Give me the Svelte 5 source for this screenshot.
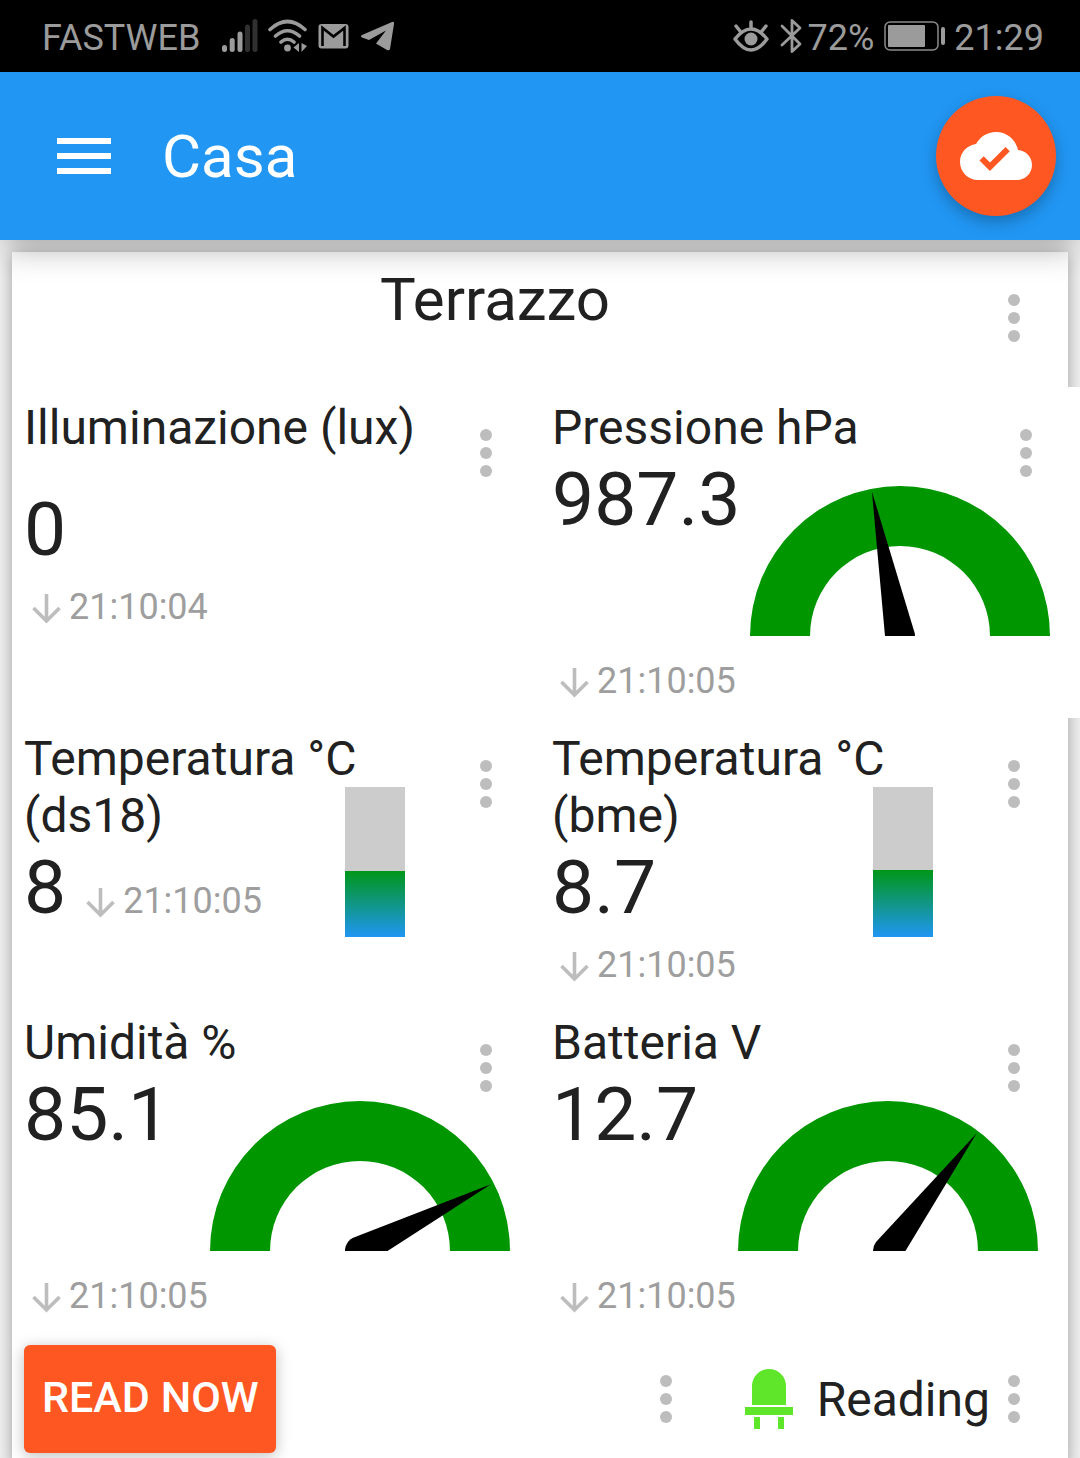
<script>
  const widgets = [
    { name: 'Illuminazione (lux)', value: '0', time: '21:10:04', kind: 'spaced' },
    { name: 'Pressione hPa', value: '987.3', time: '21:10:05', kind: 'gauge', angle: -11, wide: true },
    { name: 'Temperatura °C (ds18)', value: '8', time: '21:10:05', kind: 'tank', level: 66, inline: true },
    { name: 'Temperatura °C (bme)', value: '8.7', time: '21:10:05', kind: 'tank', level: 67 },
    { name: 'Umidità %', value: '85.1', time: '21:10:05', kind: 'gauge', angle: 63 },
    { name: 'Batteria V', value: '12.7', time: '21:10:05', kind: 'gauge', angle: 37 }
  ];
</script>

{#snippet dots(label)}
  <button class="more" aria-label={label}>
    <svg width="12" height="48" viewBox="0 0 12 48" fill="currentColor">
      <circle cx="6" cy="6" r="6" /><circle cx="6" cy="24" r="6" /><circle cx="6" cy="42" r="6" />
    </svg>
  </button>
{/snippet}

<div class="status">
  <div class="group">
    <span class="carrier">FASTWEB</span>
    <svg width="36" height="34" viewBox="0 0 36 34" stroke-width="5" stroke-linecap="round">
      <g stroke="#9b9b9b"><path d="M2.500 28.500v2M10.200 21.500v9M18 15v15.500" /></g>
      <g stroke="#303030"><path d="M25.500 8v22.500M33 2.500v28" /></g>
    </svg>
    <svg width="40" height="34" viewBox="0 0 40 34" fill="none" stroke="#9b9b9b" stroke-width="3.600" stroke-linecap="round">
      <path d="M2 10.500Q19.500 -5.500 37 10.500M7.500 17Q19.500 6.500 31.500 17M13 23Q19.500 17.500 26 23" />
      <circle cx="19.500" cy="29" r="3.400" fill="#9b9b9b" stroke="none" />
      <path d="M31 24v9l-5.500-4.500zM33.500 24v9l5.500-6z" fill="#9b9b9b" stroke="none" />
    </svg>
    <svg width="31" height="26" viewBox="0 0 31 26">
      <rect x="0.500" y="1" width="30" height="24.500" rx="3" fill="#9b9b9b" />
      <path d="M4.500 23V5L15.500 13.500L26.500 5V23" fill="none" stroke="#000" stroke-width="2.600" />
    </svg>
    <svg width="36" height="30" viewBox="0 0 36 30">
      <path d="M3 14L33 1Q35.500 0 35 3L31 28Q30.500 30 28 29L17 22.500L27 9.500L10 19L3 16.500Q1 15 3 14z" fill="#9b9b9b" />
    </svg>
  </div>
  <div class="group right">
    <svg class="eye" width="36" height="32" viewBox="0 0 36 32" fill="none" stroke="#9b9b9b" stroke-width="3.500" stroke-linecap="round" stroke-linejoin="round">
      <path d="M2 19Q18 -1 34 19Q18 41 2 19zM18 2v6M3 6l4 5M33 6l-4 5" />
      <circle cx="18" cy="19" r="6.500" fill="#9b9b9b" stroke="none" />
    </svg>
    <svg width="22" height="36" viewBox="0 0 22 36" fill="none" stroke="#9b9b9b" stroke-width="2.800" stroke-linecap="round" stroke-linejoin="round">
      <path d="M2 8L20 26L12 33.500V2.500L20 10L2 27" />
    </svg>
    <span class="percent">72%</span>
    <svg width="62" height="30" viewBox="0 0 62 30">
      <rect x="1" y="1" width="53" height="28" rx="5" fill="none" stroke="#8a8a8a" stroke-width="1.500" />
      <rect x="4" y="4" width="37" height="22" rx="1" fill="#9b9b9b" />
      <rect x="57" y="6" width="4" height="18" rx="2" fill="#9b9b9b" />
    </svg>
    <span class="clock">21:29</span>
  </div>
</div>

<header>
  <button class="burger" aria-label="Menu"><span></span><span></span><span></span></button>
  <h1>Casa</h1>
  <button class="cloud" aria-label="Connected">
    <svg width="72" height="72" viewBox="0 0 24 24" fill="#fff">
      <path d="M19.350 10.040C18.670 6.590 15.640 4 12 4 9.110 4 6.600 5.640 5.350 8.040 2.340 8.360 0 10.910 0 14c0 3.310 2.690 6 6 6h13c2.760 0 5-2.240 5-5 0-2.640-2.050-4.780-4.650-4.960zM10 17l-3.500-3.500 1.410-1.410L10 14.170 15.180 9l1.410 1.410L10 17z" />
    </svg>
  </button>
</header>

<main>
  <section class="card">
    <div class="top">
      <h2>Terrazzo</h2>
      {@render dots('Terrazzo menu')}
    </div>

    <div class="grid">
      {#each widgets as w}
        <article class="cell {w.kind}" class:wide={w.wide}>
          {#if w.kind === 'gauge'}
            <svg class="dial" width="300" height="150" viewBox="0 0 300 150">
              <path d="M0 150A150 150 0 0 1 300 150H240A90 90 0 0 0 60 150z" fill="#009600" />
              <path d="M-15 0L0 -147L15 0A15 15 0 0 1 -15 0z" transform="translate(150 150) rotate({w.angle})" />
            </svg>
          {:else if w.kind === 'tank'}
            <div class="level"><div class="fill" style="height: {w.level}px"></div></div>
          {/if}
          <div class="info" class:inline={w.inline}>
            <h3>{w.name}</h3>
            <div class="value">{w.value}</div>
            <div class="time">
              <svg width="29" height="30" viewBox="0 0 29 30" fill="none" stroke="#bdbdbd" stroke-width="3.600">
                <path d="M14.500 0V26M1.500 14L14.500 27L27.500 14" />
              </svg>
              <time>{w.time}</time>
            </div>
          </div>
          {@render dots(w.name + ' menu')}
        </article>
      {/each}
    </div>

    <div class="bottom">
      <div class="action">
        <button class="read">READ NOW</button>
        {@render dots('Read now menu')}
      </div>
      <div class="led">
        <svg width="48" height="60" viewBox="0 0 48 60" fill="#5fe62b">
          <path d="M7 36V17A17 17 0 0 1 41 17V36zM0 38H48V46H0zM9 48H15V60H9zM33 48H39V60H33z" />
        </svg>
        <span>Reading</span>
        {@render dots('Reading menu')}
      </div>
    </div>
  </section>
</main>

<style>
  :global(body) {
    margin: 0;
    background: #f0f0f0;
    color: #212121;
    font-family: Roboto, sans-serif;
    font-size: 48px;
    line-height: 57px;
  }
  :global(*) { box-sizing: border-box; }
  h1, h2, h3 { margin: 0; font-weight: 400; }
  h3 { font-size: 48px; }
  button { border: 0; padding: 0; background: none; font-family: inherit; cursor: pointer; }
  svg { display: block; flex: none; }

  .status {
    display: flex;
    justify-content: space-between;
    align-items: center;
    height: 72px;
    padding: 3px 36px 0 42px;
    background: #000;
    color: #9b9b9b;
    font-size: 36px;
    line-height: 42px;
  }
  .group { display: flex; align-items: center; gap: 10px; }
  .group svg { margin-bottom: 3px; }
  .carrier { margin-right: 12px; }
  .right { gap: 8px; }
  .eye { margin-right: 3px; }
  .percent { margin: 0 2px 0 -2px; }

  header {
    position: relative;
    z-index: 2;
    display: flex;
    align-items: center;
    height: 168px;
    padding: 0 24px 0 57px;
    background: #2196f3;
    color: #fff;
    box-shadow: 0 15px 30px -6px rgba(0, 0, 0, 0.3);
  }
  .burger { display: grid; gap: 9px; width: 54px; }
  .burger span { height: 6px; background: #fff; }
  h1 { flex: 1; margin-left: 51px; padding-top: 2px; font-size: 60px; line-height: 72px; }
  .cloud {
    display: grid;
    place-items: center;
    width: 120px;
    height: 120px;
    border-radius: 50%;
    background: #ff5722;
    box-shadow: 0 6px 15px rgba(0, 0, 0, 0.26);
  }

  main { padding: 12px 12px 0; }
  .card { background: #fff; box-shadow: 0 3px 15px rgba(0, 0, 0, 0.34); }
  .top { display: flex; padding: 12px 12px 15px; }
  h2 { flex: 1; padding-right: 6px; font-size: 60px; line-height: 72px; text-align: center; }
  .more {
    display: grid;
    place-items: center;
    flex: none;
    width: 84px;
    height: 108px;
    color: #bdbdbd;
  }

  .grid { display: grid; grid-template-columns: 1fr 1fr; }
  .cell { display: grid; padding: 12px; background: #fff; }
  .cell > * { grid-area: 1 / 1; }
  .cell > .more { justify-self: end; }
  .wide { margin-right: -12px; }
  .info { padding-right: 84px; }
  .value { font-size: 75px; line-height: 86px; }
  .spaced .value { margin-top: 30px; }
  .time {
    display: flex;
    align-items: center;
    gap: 8px;
    padding: 14px 0 4px 8px;
    color: #9e9e9e;
    font-size: 36px;
    line-height: 42px;
  }
  .time svg { margin-top: 4px; }
  .gauge .time { margin-top: 104px; }
  .inline { display: flex; flex-wrap: wrap; align-items: center; align-content: flex-start; column-gap: 12px; }
  .inline h3 { width: 100%; }
  .inline .time { padding-top: 32px; }
  .dial { justify-self: end; margin: 87px 18px 0 0; }
  .level {
    display: flex;
    align-items: flex-end;
    justify-self: end;
    width: 60px;
    height: 150px;
    margin: 57px 123px 0 0;
    background: #ccc;
  }
  .fill { width: 100%; background: linear-gradient(#009618, #2196f3); }

  .bottom { display: flex; padding: 12px; }
  .action { display: flex; flex: 1; justify-content: space-between; }
  .read {
    height: 108px;
    padding: 0 17px 4px 18px;
    border-radius: 6px;
    background: #ff5722;
    color: #fff;
    font-size: 43px;
    font-weight: 500;
    box-shadow: 0 3px 15px rgba(0, 0, 0, 0.26);
  }
  .led { display: flex; flex: 0 0 348px; align-items: center; justify-content: flex-end; }
  .led span { margin-left: 24px; }
  .led .more { width: 66px; padding-right: 18px; }
</style>
